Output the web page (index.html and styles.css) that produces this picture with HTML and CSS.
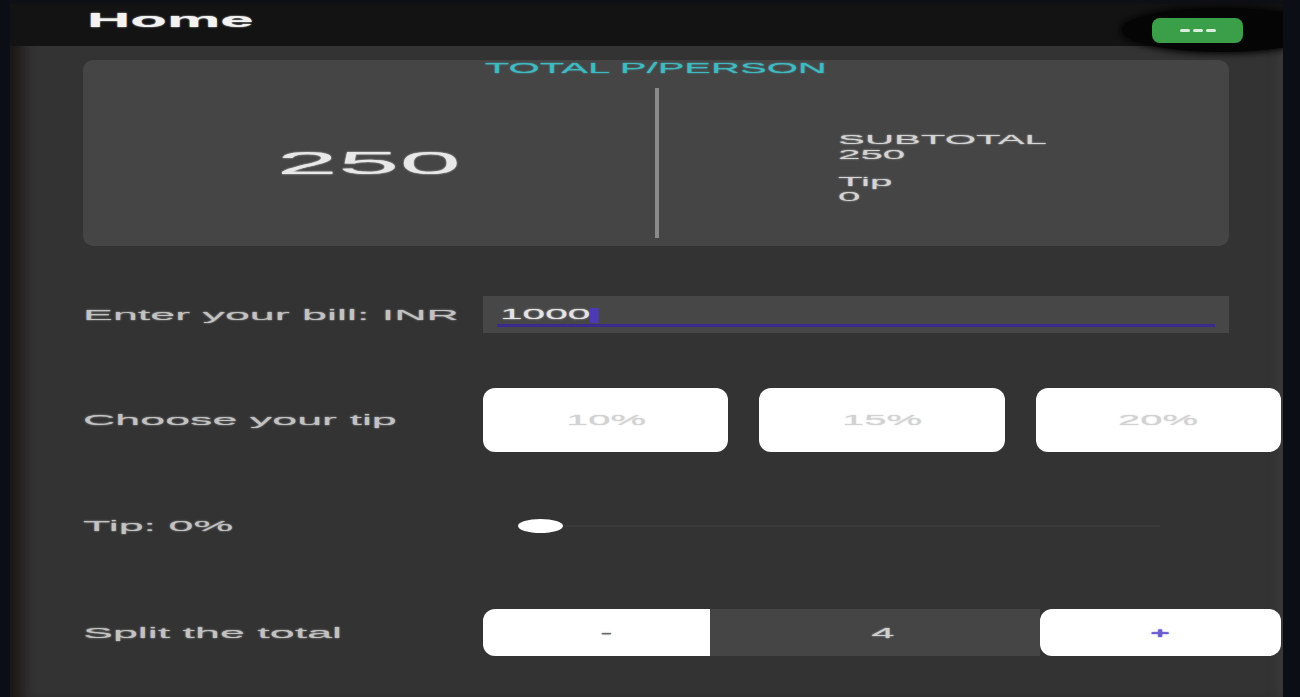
FILE: index.html
```html
<!DOCTYPE html>
<html lang="en">
<head>
<meta charset="utf-8">
<title>Home</title>
<link rel="stylesheet" href="styles.css">
</head>
<body>
<div class="phone">
  <header class="topbar"><span class="sx home">Home</span></header>
  <div class="fab-shadow"></div>
  <button class="fab" type="button"><span></span><span></span><span></span></button>
  <main class="content">
    <section class="card">
      <div class="card-title"><span class="sx sx-c title">TOTAL P/PERSON</span></div>
      <div class="card-body">
        <div class="per-person"><span class="sx sx-c big">250</span></div>
        <div class="divider"></div>
        <div class="breakdown">
          <div class="group"><span class="sx small">SUBTOTAL</span><span class="sx small">250</span></div>
          <div class="group"><span class="sx small">Tip</span><span class="sx small">0</span></div>
        </div>
      </div>
    </section>

    <div class="row row-bill">
      <div class="label"><span class="sx lbl">Enter your bill: INR</span></div>
      <div class="input">
        <div class="value"><span class="sx val">1000<span class="cursor"></span></span></div>
        <div class="line"></div>
      </div>
    </div>

    <div class="row row-tip">
      <div class="label"><span class="sx lbl">Choose your tip</span></div>
      <div class="chips">
        <button class="chip" type="button"><span class="sx sx-c chip-text">10%</span></button>
        <button class="chip" type="button"><span class="sx sx-c chip-text">15%</span></button>
        <button class="chip" type="button"><span class="sx sx-c chip-text">20%</span></button>
      </div>
    </div>

    <div class="row row-slider">
      <div class="label"><span class="sx lbl">Tip: 0%</span></div>
      <div class="slider">
        <div class="track"></div>
        <div class="thumb"></div>
      </div>
    </div>

    <div class="row row-split">
      <div class="label"><span class="sx lbl">Split the total</span></div>
      <div class="stepper">
        <button class="step-btn minus" type="button"><span class="sx sx-c step-minus">-</span></button>
        <div class="count"><span class="sx sx-c count-text">4</span></div>
        <button class="step-btn plus" type="button"><span class="sx sx-c step-plus">+</span></button>
      </div>
    </div>
  </main>
</div>
</body>
</html>
```

FILE: styles.css
```css
* {
  box-sizing: border-box;
  margin: 0;
  padding: 0;
}

html,
body {
  width: 1300px;
  height: 697px;
  overflow: hidden;
}

body {
  background: #0b0e15;
  font-family: "Liberation Sans", Arial, sans-serif;
}

.phone {
  position: relative;
  margin-left: 10px;
  width: 1273px;
  height: 697px;
  background: #333333;
  overflow: hidden;
  box-shadow: inset 22px 0 14px -10px #1c1714, inset -14px 0 10px -8px #3a3a3a;
}

/* horizontally stretched text */
.sx {
  display: inline-block;
  white-space: nowrap;
  transform-origin: left center;
  text-shadow: 0 0 1px currentColor;
}

.sx-c {
  transform-origin: center center;
}

.topbar {
  height: 46px;
  background: #131313;
  border-top: 4px solid #0f0f16;
  padding: 3px 0 0 77px;
}

.home {
  font-size: 20px;
  line-height: 26px;
  font-weight: bold;
  color: #f2f2f2;
  transform: scaleX(3);
}

.fab-shadow {
  position: absolute;
  left: 1112px;
  top: 8px;
  width: 200px;
  height: 44px;
  border-radius: 50%;
  background: #050506;
  box-shadow: 0 0 6px 2px #050506;
}

.fab {
  position: absolute;
  left: 1142px;
  top: 18px;
  width: 91px;
  height: 25px;
  border: none;
  border-radius: 8px;
  background: #3b9f49;
  display: flex;
  align-items: center;
  justify-content: center;
  gap: 3px;
}

.fab span {
  width: 10px;
  height: 3px;
  border-radius: 2px;
  background: #d9efdb;
}

.content {
  padding: 14px 2px 0 73px;
}

.card {
  width: 1146px;
  height: 186px;
  background: #454545;
  border-radius: 10px;
}

.card-title {
  height: 16px;
  line-height: 16px;
  text-align: center;
}

.title {
  font-size: 14px;
  color: #41b9c1;
  transform: scaleX(2.86);
}

.card-body {
  display: grid;
  grid-template-columns: 572px 4px 1fr;
  height: 150px;
  margin-top: 12px;
}

.per-person {
  display: flex;
  align-items: center;
  justify-content: center;
}

.big {
  font-size: 32px;
  line-height: 34px;
  color: #e8e8e8;
  transform: scaleX(3.45);
}

.divider {
  background: #8a8a8a;
}

.breakdown {
  padding: 44px 0 0 179px;
  display: flex;
  flex-direction: column;
  gap: 12px;
}

.group {
  display: flex;
  flex-direction: column;
  align-items: flex-start;
}

.small {
  font-size: 13px;
  line-height: 15px;
  color: #d4d4d4;
  transform: scaleX(3.1);
}

.row {
  display: grid;
  grid-template-columns: 400px 1fr;
  align-items: center;
}

.label {
  line-height: 18px;
}

.lbl {
  font-size: 14px;
  color: #c2c2c2;
  transform: scaleX(3.2);
}

.row-bill {
  margin-top: 50px;
  height: 37px;
  grid-template-columns: 400px 746px;
}

.input {
  height: 37px;
  background: #474747;
  padding: 9px 14px 0;
}

.value {
  height: 18px;
  line-height: 18px;
  padding-left: 3px;
  font-size: 14px;
  color: #e4e4e4;
}

.val {
  transform: scaleX(2.9);
}

.cursor {
  display: inline-block;
  width: 3px;
  height: 15px;
  background: #4a3bb4;
  vertical-align: middle;
}

.line {
  height: 3px;
  margin-top: 1px;
  background: #3b2b8f;
}

.row-tip {
  margin-top: 55px;
  height: 64px;
}

.chips {
  display: flex;
  gap: 31px;
  height: 64px;
}

.chip {
  flex: 1;
  border: none;
  background: #ffffff;
  border-radius: 12px;
  display: flex;
  align-items: center;
  justify-content: center;
  font-family: inherit;
}

.chip-text {
  font-size: 14px;
  color: #d2d2d2;
  transform: scaleX(2.86);
}

.row-slider {
  margin-top: 56px;
  height: 36px;
}

.slider {
  position: relative;
  height: 36px;
  padding-left: 35px;
  display: flex;
  align-items: center;
}

.track {
  width: 642px;
  height: 2px;
  background: #3a3a3a;
}

.thumb {
  position: absolute;
  left: 35px;
  top: 11px;
  width: 45px;
  height: 14px;
  border-radius: 50%;
  background: #ffffff;
}

.row-split {
  margin-top: 65px;
  height: 47px;
}

.stepper {
  display: grid;
  grid-template-columns: 227px 330px 1fr;
  height: 47px;
}

.step-btn {
  border: none;
  background: #ffffff;
  display: flex;
  align-items: center;
  justify-content: center;
  font-family: inherit;
}

.minus {
  border-radius: 12px 0 0 12px;
  padding-left: 20px;
}

.plus {
  border-radius: 12px;
}

.count {
  background: #454545;
  display: flex;
  align-items: center;
  justify-content: center;
  padding-left: 16px;
}

.step-minus {
  font-size: 14px;
  color: #666666;
  transform: scaleX(2.6);
}

.count-text {
  font-size: 14px;
  color: #cfcfcf;
  transform: scaleX(3);
}

.step-plus {
  font-size: 14px;
  font-weight: bold;
  color: #6b5bd0;
  transform: scaleX(2.4);
}
```
